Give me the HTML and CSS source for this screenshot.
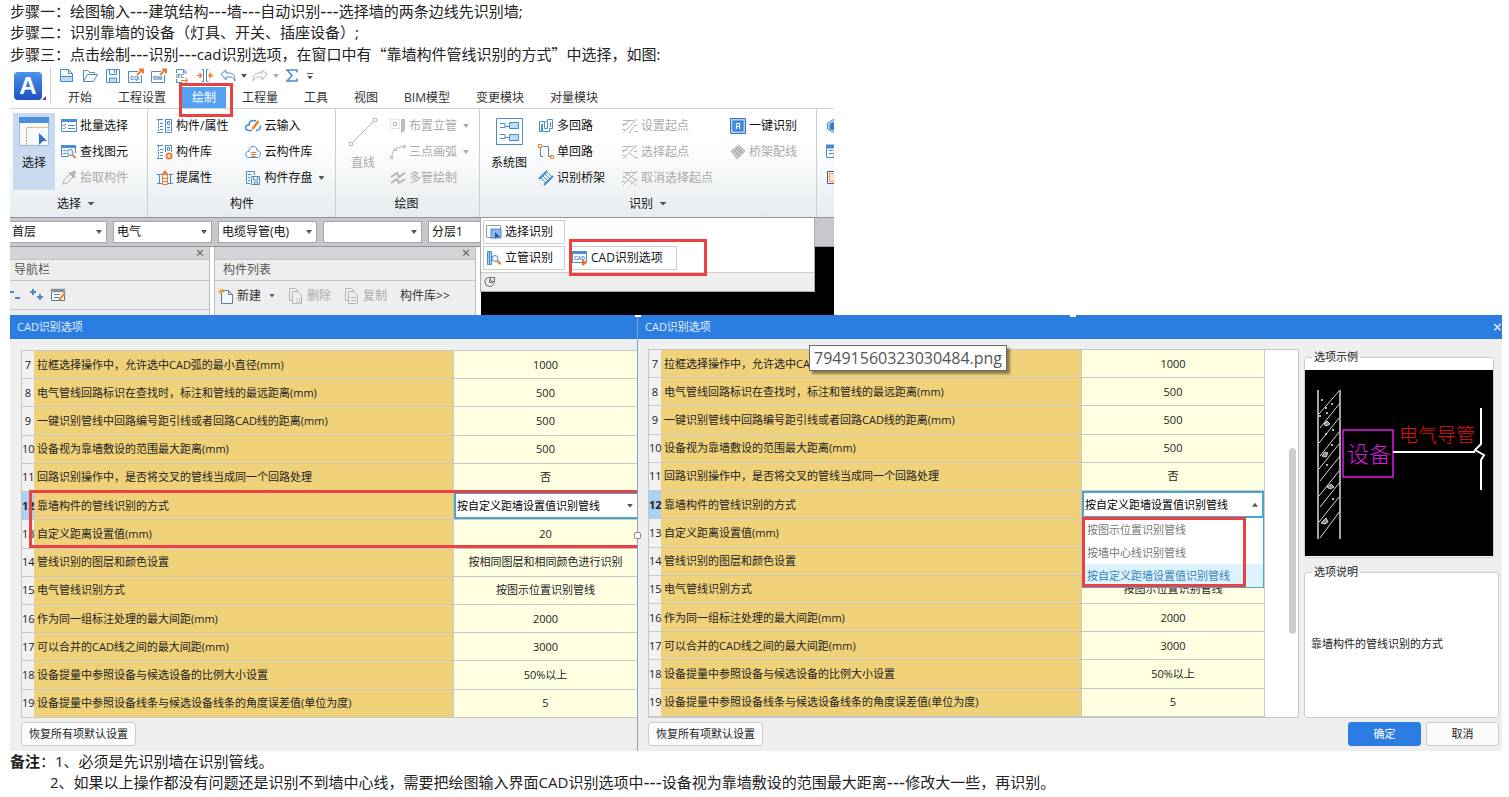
FILE: index.html
```html
<!DOCTYPE html>
<html lang="zh-CN">
<head>
<meta charset="utf-8">
<title>CAD识别选项</title>
<link rel="stylesheet" href="styles.css">
</head>
<body>
<main class="article">
<p>步骤一：绘图输入<span class="dash">---</span>建筑结构<span class="dash">---</span>墙<span class="dash">---</span>自动识别<span class="dash">---</span>选择墙的两条边线先识别墙;</p>
<p>步骤二：识别靠墙的设备（灯具、开关、插座设备）;</p>
<p>步骤三：点击绘制<span class="dash">---</span>识别<span class="dash">---</span>cad识别选项，在窗口中有<span class="cjk">“</span>靠墙构件管线识别的方式<span class="cjk">”</span>中选择，如图:</p>

<section class="app">
  <header class="app-head">
    <div class="logo-cell"><span class="logo">A</span><i class="corner"></i></div>
    <div class="head-rows">
      <div class="quick">
        <svg viewBox="0 0 16 16" class="blue"><path d="M2 9h12v5H2z" fill="#bcdcf5" stroke="none"/><path d="M1.500 1.500h8l4 4v8h-12zM9.500 1.500v4h4M1.500 8.500h12"/></svg>
        <svg viewBox="0 0 16 16" class="blue"><path d="M1.500 13.500v-11h4l2 2h5v2M1.500 13.500l4-7h10l-4 7z"/></svg>
        <svg viewBox="0 0 16 16" class="blue"><path d="M4 10h8v4H4z" fill="#bcdcf5" stroke="none"/><path d="M1.500 1.500h13v13h-13zM4.500 1.500v5h7v-5M4.500 14v-4h7v4M9.500 2v3"/></svg>
        <svg viewBox="0 0 16 16" class="blue"><path d="M10 3.500H.5v11h13V7"/><text x="2" y="12">GQI</text><path class="or" d="M9 7l5-5M11 1.500h4v4" stroke-width="2"/></svg>
        <svg viewBox="0 0 16 16" class="blue"><path d="M10 3.500H.5v11h13V7"/><text x="2" y="12">BIM</text><path class="or" d="M9 7l5-5M11 1.500h4v4" stroke-width="2"/></svg>
        <svg viewBox="0 0 16 16" class="blue"><path d="M2.500 5V1.500h7l3 3V5M9.500 2v3h3M2.500 11v3.500h6"/><text x="2" y="10">IFC</text><path class="or" d="M7 12.500h6M11 10l3 2.500-3 2.500"/></svg>
        <svg viewBox="0 0 16 16" class="blue"><path class="or" stroke-width="1.500" d="M0 7.500h4M2.500 5l2 2.500-2 2.500M16 7.500h-4M14 5l-2 2.500 2 2.500"/><path d="M6.500 1.500v12M9.500 1.500v12M5 1.500h2M5 13.500h2M9.500 1.500h2M9.500 13.500h2"/></svg>
        <svg viewBox="0 0 16 16" class="blue"><path d="M1 6l5-4v3h3c4 0 6 3 6 8-2-4-4-4-6-4H6v3z"/></svg>
        <i class="caret"></i>
        <svg viewBox="0 0 16 16" class="gray"><path d="M15 6l-5-4v3H7c-4 0-6 3-6 8 2-4 4-4 6-4h3v3z"/></svg>
        <i class="caret pale"></i>
        <svg viewBox="0 0 16 16" class="blue"><path d="M13 4.500V2H3l5 5.500L3 13h10v-2.500" stroke-width="1.500"/></svg>
        <i class="more"><i class="caret"></i></i>
      </div>
      <nav class="tabs">
        <button>开始</button><button>工程设置</button><button class="active">绘制</button><button>工程量</button><button>工具</button><button>视图</button><button>BIM模型</button><button>变更模块</button><button>对量模块</button>
        <span class="mark mark-tab"></span>
      </nav>
    </div>
  </header>

  <div class="ribbon">
    <div class="group g-select">
      <div class="tools">
        <button class="big on"><svg viewBox="0 0 30 30"><path d="M.5.5h29v28H.5z" fill="#f6f9fd" stroke="#9dbbe0"/><path d="M0 0h30v6H0z" fill="#4a90dc"/><path d="M7.500 28V10.500H29" fill="none" stroke="#e8a33a" stroke-dasharray="2 1"/><path d="M20 16l8 8h-4l-4 4z" fill="#2f74c0"/></svg>选择</button>
        <div class="stack">
          <button><svg viewBox="0 0 16 16" class="blue"><path d="M.5 1.500h15v12H.5zM7 7.500h7M7 10.500h7M2 7l1 1 2-2M2 10l1 1 2-2"/><path d="M0 1h16v3H0z" fill="#4a8fd6" stroke="none"/></svg>批量选择</button>
          <button><svg viewBox="0 0 16 16" class="blue"><path d="M14.500 9V2.500H.5v10h7M2 6.500h3M2 9.500h3"/><path d="M0 1h15v3H0z" fill="#4a8fd6" stroke="none"/><circle cx="9" cy="8.500" r="3" fill="#e6f3fd"/><path class="or" d="M11.500 11l3 3" stroke-width="2"/></svg>查找图元</button>
          <button class="off"><svg viewBox="0 0 16 16" class="gray"><path d="M2 14l1-4 6-6 3 3-6 6z"/><path d="M8 3l5 5 1-2-1-1 2-3-2-1-3 2-1-1z" fill="#b5b5b5"/></svg>拾取构件</button>
        </div>
      </div>
      <div class="caption">选择<i class="caret"></i></div>
    </div>
    <div class="group g-comp">
      <div class="tools">
        <div class="stack">
          <button><svg viewBox="0 0 16 16" class="blue"><path d="M0 1.500h6M0 14.500h6M3 5.500h3M3 8.500h3M3 11.500h3"/><path d="M1.500 2v12" stroke-dasharray="2 1"/><path d="M8.500 1.500h6v13h-6zM10.500 3.500h2v3h-2zM10 9.500h3M10 12h3"/></svg>构件/属性</button>
          <button><svg viewBox="0 0 16 16" class="blue"><path d="M0 1.500h6M0 14.500h6M3 5.500h3M3 8.500h3M3 11.500h3"/><path d="M1.500 2v12" stroke-dasharray="2 1"/><path d="M8.500 8V1.500h6V8M10.500 3.500h2v3h-2z"/><circle class="or" cx="12" cy="12" r="2.500" stroke-width="2"/></svg>构件库</button>
          <button><svg viewBox="0 0 16 16" class="blue"><path d="M0 4.500h4M2.500 4v10M0 13.500h5M11 13.500h5M12 4.500h4M13.500 4v10"/><path d="M5.500 5v9.500h5V5M6 8.500h5M6 11.500h5" class="or"/><path d="M8 0l4 5H4z" fill="#ed7d31" stroke="none"/></svg>提属性</button>
        </div>
        <div class="stack">
          <button><svg viewBox="0 0 16 16" class="blue"><path d="M7 12.500H4C-1 12.500 0 6 4 7c0-5 5-5 7-4M11 12.500c3 0 5-2 4-5" stroke-width="1.500"/><path class="or" d="M7.500 11l6-8" stroke-width="2.500"/></svg>云输入</button>
          <button><svg viewBox="0 0 16 16" class="blue"><path d="M4 13.500C-1 13 0 7 4 7.500c0-7 9-6 8-1 5 0 4 7 0 7z"/><path class="or" d="M6 8.500h5M5.500 10.500h6M6.500 12.500h4"/></svg>云构件库</button>
          <button><svg viewBox="0 0 16 16" class="blue"><path d="M5 13.500H1.500v-12h8V5M3 4.500h3M3 7.500h2M3 10.500h2M6.500 6.500h8v8h-8zM8.500 7v3h4V7M9.500 14v-2h3v2"/></svg>构件存盘<i class="caret"></i></button>
        </div>
      </div>
      <div class="caption">构件</div>
    </div>
    <div class="group g-draw">
      <div class="tools">
        <button class="big off"><svg viewBox="0 0 30 30" class="gray"><path d="M4 26L26 4"/><path d="M1.500 25.500h3v3h-3zM25.500 1.500h3v3h-3z" fill="#fff"/></svg>直线</button>
        <div class="stack">
          <button class="off"><svg viewBox="0 0 16 16" class="gray"><path d="M.5 1.500h9v9h-9z" stroke-dasharray="1 2"/><path d="M3.500 4.500h3v3h-3z"/><path d="M11.500 1.500h3v11l-3 2zM13 2v11" fill="#d0d0d0"/></svg>布置立管<i class="caret pale"></i></button>
          <button class="off"><svg viewBox="0 0 16 16" class="gray"><path d="M2 13C2 6 6 3 14 2.500"/><path d="M.5 12.500h2v2h-2zM13.500 1.500h2v2h-2zM4.500 4.500h2v2h-2z" fill="#fff"/></svg>三点画弧<i class="caret pale"></i></button>
          <button class="off"><svg viewBox="0 0 16 16" class="gray"><path d="M1 7l6-4 2 4 6-4M1 13l6-4 2 4 6-4" stroke-width="2"/></svg>多管绘制</button>
        </div>
      </div>
      <div class="caption">绘图</div>
    </div>
    <div class="group g-rec">
      <div class="tools">
        <button class="big"><svg viewBox="0 0 30 30" class="blue"><path d="M2.500 1.500h26v26h-26zM6 6.500h5v4H6M11 9.500h4M6 17.500h5v4H6M11 20.500h4"/><path d="M15.500 5.500h9v6h-9zM15.500 17.500h9v6h-9z" fill="#b9dcf8"/></svg>系统图</button>
        <div class="stack">
          <button><svg viewBox="0 0 16 16" class="blue"><path d="M1.500 14V3.500h5v7h3v-9h5v9h-3v3h-7v-8M9.500 3.500h-2M12.500 4v5M1.500 13.500h2v-7"/></svg>多回路</button>
          <button><svg viewBox="0 0 16 16" class="gray"><path d="M2.500 4v8.500H5M4.500 2.500h6v10h3" stroke="#648098"/><path class="or" d="M.5.5h3v3h-3zM12.500 11.500h3v3h-3z"/></svg>单回路</button>
          <button><svg viewBox="0 0 16 16" class="blue"><path d="M1 9l8-8M6 15l9-9" stroke-width="2"/><path d="M3 8l5 5M5 6l5 5M7 4l5 5M9 2l5 5"/></svg>识别桥架</button>
        </div>
        <div class="stack">
          <button class="off"><svg viewBox="0 0 16 16" class="gray"><path d="M1 2.500h11M1 8l7-6M1 15L15 1M0 6.500h5M7 15l6-8M12 7.500h3M12 13.500h4M0 11.500h3"/></svg>设置起点</button>
          <button class="off"><svg viewBox="0 0 16 16" class="gray"><path d="M1 2.500h11M1 8l7-6M1 15L15 1M0 6.500h5M8 9l5 5M12 7.500h3M12 13.500h4M0 11.500h3"/></svg>选择起点</button>
          <button class="off"><svg viewBox="0 0 16 16" class="gray"><path d="M1 2.500h14M1 8l7-6M1 15L15 1M8 15l7-7M1 6l13 9M4 3l11 8M0 11.500h3"/></svg>取消选择起点</button>
        </div>
        <div class="stack">
          <button><svg viewBox="0 0 16 16" class="blue"><path d="M.5.5h15v15H.5z" fill="#a9d2f6" stroke="#3c75b8"/><path d="M3 3h10v10H3z" fill="#4a90e0" stroke="#3c75b8"/><path d="M6.500 11V5.500h3V11M7 8.500h2" stroke="#fff"/></svg>一键识别</button>
          <button class="off"><svg viewBox="0 0 16 16" class="gray"><path d="M1 7l8-6 6 6-8 8z" fill="#ccc"/><path d="M4 6l5 6M6 4l5 6M8 3l5 6" stroke="#999"/></svg>桥架配线</button>
        </div>
      </div>
      <div class="caption">识别<i class="caret"></i></div>
    </div>
    <div class="group g-more">
      <div class="stack">
        <button aria-label="三维"><svg viewBox="0 0 16 16" class="blue"><path d="M1.500 5l7-4v14l-7-4z" fill="#b9dcf8"/><path d="M4 6l4-2v8l-4-1z" fill="#3475c5"/></svg></button>
        <button aria-label="表格"><svg viewBox="0 0 16 16" class="blue"><path d="M.5 1.500h15v12H.5zM3 6.500h4M3 9.500h4"/><path d="M0 1h16v3H0z" fill="#4a8fd6"/><path class="or" d="M8 8v5"/></svg></button>
        <button aria-label="区域"><svg viewBox="0 0 16 16" class="gray"><path d="M1.500 1.500h13v12h-13z" stroke="#557"/><path class="or" d="M3.500 3.500h9v8h-9z" fill="#fae0c8" stroke-dasharray="2 1"/></svg></button>
      </div>
    </div>
  </div>

  <div class="work">
    <div class="combos">
      <label class="combo"><select aria-label="楼层"><option>首层</option></select></label>
      <label class="combo"><select aria-label="专业"><option>电气</option></select></label>
      <label class="combo"><select aria-label="构件类型"><option>电缆导管(电)</option></select></label>
      <label class="combo"><select aria-label="构件"><option></option></select></label>
      <label class="combo"><select aria-label="分层"><option>分层1</option></select></label>
    </div>
    <div class="panels">
      <section class="panel nav-panel">
        <div class="strip"><button aria-label="关闭">×</button></div>
        <h2>导航栏</h2>
        <div class="bar">
          <svg viewBox="2 0 16 16" class="blue bold"><path d="M2 5h4M7 11h5"/></svg>
          <svg viewBox="0 0 16 16" class="blue bold"><path d="M0 5h6M3 2v6M7 10h6M10 7v6"/></svg>
          <svg viewBox="0 0 16 16" class="gray"><path d="M1.500 2.500h13v11h-13zM4 7.500h6M4 10.500h5" fill="#fff" stroke="#5a7894"/><path d="M1 2h14v3H1z" fill="#6b87a0"/><path class="or" d="M9 13l6-7" stroke-width="2"/></svg>
        </div>
      </section>
      <section class="panel list-panel">
        <div class="strip"><button aria-label="关闭">×</button></div>
        <h2>构件列表</h2>
        <div class="bar">
          <button><svg viewBox="0 0 16 16"><path d="M3.500 2.500h7l4 4v9h-11zM10.500 2.500v4h4" fill="#f0f6fb" stroke="#687c90"/><path d="M0 3.500h6M3 .5v6M1 1.500l4 4M5 1.500l-4 4" stroke="#eda32f"/></svg>新建<i class="caret"></i></button>
          <button class="off"><svg viewBox="0 0 16 16" class="gray"><path d="M4 12.500H1.500V.5h6l3 3M4.500 3.500h5l4 4v8h-9zM8 10l5 5M13 10l-5 5"/></svg>删除</button>
          <button class="off"><svg viewBox="0 0 16 16" class="gray"><path d="M4 12.500H1.500V.5h6l3 3M4.500 3.500h5l4 4v8h-9zM7 9.500h5M7 12.500h5"/></svg>复制</button>
          <button>构件库&gt;&gt;</button>
        </div>
      </section>
      <div class="canvas"></div>
    </div>
    <div class="popover">
      <div class="pop-body">
        <button><svg viewBox="0 0 16 16" class="blue"><path d="M.5 1.500h14v12H.5z" stroke="#8a9db0"/><path d="M5 5h10v9H5z" fill="#8db9ea"/><path d="M9 8l5 5h-3l-2 2z" fill="#235a9c" stroke="none"/></svg>选择识别</button>
        <button><svg viewBox="0 0 16 16" class="blue"><path d="M1.500 1.500h4v13h-4zM3.500 2v12" fill="#a8cdf4"/><circle cx="9" cy="8.500" r="3" fill="#eaf5fe"/><path class="or" d="M11.500 11l3 3" stroke-width="2.500"/></svg>立管识别</button>
        <button class="cad"><svg viewBox="0 0 16 16" class="blue"><path d="M.5 1.500h14v11H.5z"/><path d="M0 1h15v3H0z" fill="#4a8fd6" stroke="none"/><text x="2" y="10">CAD</text><path d="M10 9l5 4-5 3z" fill="#ed6a2d" stroke="none"/></svg>CAD识别选项</button>
      </div>
      <div class="pop-foot"><svg viewBox="0 0 12 12"><path d="M10 6.500A4.500 4.500 0 1 1 5 1.500M8.500 6.500h-3v-3M5.500 1.500h5v4h-3z" fill="none" stroke="#666"/></svg></div>
      <span class="mark mark-cad"></span>
    </div>
  </div>
</section>

<div class="dialogs">
  <section class="dialog first">
    <header class="title">CAD识别选项</header>
    <div class="content">
      <div class="table-box">
        <table>
          <colgroup><col class="c-no"><col><col class="c-val"></colgroup>
          <tbody>
          <tr><th>7</th><td>拉框选择操作中，允许选中CAD弧的最小直径(mm)</td><td>1000</td></tr>
          <tr><th>8</th><td>电气管线回路标识在查找时，标注和管线的最远距离(mm)</td><td>500</td></tr>
          <tr><th>9</th><td>一键识别管线中回路编号距引线或者回路CAD线的距离(mm)</td><td>500</td></tr>
          <tr><th>10</th><td>设备视为靠墙敷设的范围最大距离(mm)</td><td>500</td></tr>
          <tr><th>11</th><td>回路识别操作中，是否将交叉的管线当成同一个回路处理</td><td>否</td></tr>
          <tr class="current"><th>12</th><td>靠墙构件的管线识别的方式</td><td><label class="combo"><select aria-label="靠墙构件的管线识别的方式"><option>按自定义距墙设置值识别管线</option></select></label></td></tr>
          <tr><th>13</th><td>自定义距离设置值(mm)</td><td>20</td></tr>
          <tr><th>14</th><td>管线识别的图层和颜色设置</td><td>按相同图层和相同颜色进行识别</td></tr>
          <tr><th>15</th><td>电气管线识别方式</td><td>按图示位置识别管线</td></tr>
          <tr><th>16</th><td>作为同一组标注处理的最大间距(mm)</td><td>2000</td></tr>
          <tr><th>17</th><td>可以合并的CAD线之间的最大间距(mm)</td><td>3000</td></tr>
          <tr><th>18</th><td>设备提量中参照设备与候选设备的比例大小设置</td><td>50%以上</td></tr>
          <tr><th>19</th><td>设备提量中参照设备线条与候选设备线条的角度误差值(单位为度)</td><td>5</td></tr>
          </tbody>
        </table>
        <span class="mark mark-rows"></span>
      </div>
    </div>
    <footer class="foot"><button class="btn reset">恢复所有项默认设置</button></footer>
    <span class="handle"></span>
  </section>

  <section class="dialog second">
    <header class="title">CAD识别选项<button aria-label="关闭">×</button></header>
    <div class="content">
      <div class="table-box scroll">
        <table>
          <colgroup><col class="c-no"><col><col class="c-val"></colgroup>
          <tbody>
          <tr><th>7</th><td>拉框选择操作中，允许选中CAD弧的最小直径(mm)</td><td>1000</td></tr>
          <tr><th>8</th><td>电气管线回路标识在查找时，标注和管线的最远距离(mm)</td><td>500</td></tr>
          <tr><th>9</th><td>一键识别管线中回路编号距引线或者回路CAD线的距离(mm)</td><td>500</td></tr>
          <tr><th>10</th><td>设备视为靠墙敷设的范围最大距离(mm)</td><td>500</td></tr>
          <tr><th>11</th><td>回路识别操作中，是否将交叉的管线当成同一个回路处理</td><td>否</td></tr>
          <tr class="current"><th>12</th><td>靠墙构件的管线识别的方式</td><td><label class="combo open"><select aria-label="靠墙构件的管线识别的方式"><option>按自定义距墙设置值识别管线</option></select></label>
            <ul class="menu"><li>按图示位置识别管线</li><li>按墙中心线识别管线</li><li class="chosen">按自定义距墙设置值识别管线</li></ul></td></tr>
          <tr><th>13</th><td>自定义距离设置值(mm)</td><td></td></tr>
          <tr><th>14</th><td>管线识别的图层和颜色设置</td><td></td></tr>
          <tr><th>15</th><td>电气管线识别方式</td><td>按图示位置识别管线</td></tr>
          <tr><th>16</th><td>作为同一组标注处理的最大间距(mm)</td><td>2000</td></tr>
          <tr><th>17</th><td>可以合并的CAD线之间的最大间距(mm)</td><td>3000</td></tr>
          <tr><th>18</th><td>设备提量中参照设备与候选设备的比例大小设置</td><td>50%以上</td></tr>
          <tr><th>19</th><td>设备提量中参照设备线条与候选设备线条的角度误差值(单位为度)</td><td>5</td></tr>
          </tbody>
        </table>
        <span class="thumb"></span>
      </div>
      <aside class="side">
        <fieldset class="sample">
          <legend>选项示例</legend>
          <svg viewBox="0 0 188 186">
            <rect width="188" height="186" fill="#000"/>
            <g fill="none" stroke="#d8d8d8">
              <path d="M13 20v149M35 20v149" stroke-width="1.500"/>
              <path d="M14 44l20-23M15 58l20-25M14 73l20-25M15 86l20-25M14 99l20-25M15 111l20-25M14 126l20-25M15 137l20-25M14 152l20-25M15 168l20-27"/>
              <path d="M19 54l3-3 3 3-4 2zM17 86l3-4 3 1-2 4zM22 117l4-3 3 3-4 2zM16 153l5-5 2 4-3 2z" fill="#888"/>
            </g>
            <g fill="#eee"><circle cx="17" cy="30" r="1"/><circle cx="27" cy="34" r="1"/><circle cx="21" cy="38" r="1"/><circle cx="22" cy="43" r="1"/><circle cx="15" cy="46" r="1"/><circle cx="21" cy="64" r="1"/><circle cx="28" cy="60" r="1"/><circle cx="27" cy="75" r="1"/><circle cx="22" cy="95" r="1"/><circle cx="28" cy="129" r="1"/></g>
            <rect x="38" y="60" width="50" height="47" fill="none" stroke="#e815e8" stroke-width="1.500"/>
            <text x="42" y="92" font-size="22" font-weight="300" fill="#d81be0">设备</text>
            <text x="94" y="72" font-size="19" font-weight="300" fill="#e01010">电气导管</text>
            <path d="M88 82h82M176 38v36l-6 6 9 5-3 5v30" fill="none" stroke="#fff" stroke-width="2"/>
          </svg>
        </fieldset>
        <fieldset class="note">
          <legend>选项说明</legend>
          <p>靠墙构件的管线识别的方式</p>
        </fieldset>
      </aside>
    </div>
    <footer class="foot"><button class="btn reset">恢复所有项默认设置</button><span class="spacer"></span><button class="btn ok">确定</button><button class="btn">取消</button></footer>
    <span class="tooltip">79491560323030484.png</span>
    <span class="dot dot-left"></span><span class="dot dot-mid"></span>
  </section>
</div>

<p><b>备注</b>：1、必须是先识别墙在识别管线。</p>
<p class="indent">2、如果以上操作都没有问题还是识别不到墙中心线，需要把绘图输入界面CAD识别选项中<span class="dash">---</span>设备视为靠墙敷设的范围最大距离<span class="dash">---</span>修改大一些，再识别。</p>
</main>
</body>
</html>
```

FILE: styles.css
```css
* { box-sizing: border-box; }
body {
  margin: 0;
  background: #fff;
  color: #222;
  font: 15px/21px "Open Sans", "Noto Sans CJK SC", sans-serif;
}
.article { padding: 1px 7px 0 10px; }
.article p { margin: 0; }
.dash { font-family: "DejaVu Sans", sans-serif; font-size: 17px; line-height: 16px; }
.cjk { font-family: "Noto Sans CJK SC", sans-serif; }
.indent { padding-left: 40px; }

button, select { font: inherit; color: inherit; margin: 0; padding: 0; border: 0; background: none; border-radius: 0; }
svg { display: block; flex: none; width: 16px; height: 16px; }
svg text { font-family: "Noto Sans CJK SC", sans-serif; stroke: none; }
.blue { fill: none; stroke: #4a8bc9; }
.blue text { fill: #3f7fc0; font: bold 5px "Liberation Sans", sans-serif; }
.gray { fill: none; stroke: #b5b5b5; }
.or { stroke: #ed7d31; }
.bold { stroke-width: 2; }
.caret { display: block; flex: none; width: 6px; height: 4px; background: #555; clip-path: polygon(0 0, 100% 0, 50% 100%); }
.caret.pale { background: #aaa; }
.mark { position: absolute; border: 3px solid #ec4043; pointer-events: none; }

/* application window */
.app {
  max-width: 824px;
  overflow: hidden;
  background: #fff;
  color: #111;
  font-size: 12px;
  line-height: 18px;
}
.app-head { display: flex; height: 43px; }
.logo-cell { display: flex; align-items: flex-end; width: 41px; height: 37px; margin-top: 2px; padding: 0 0 4px 4px; border-right: 1px solid #d5d5d5; }
.logo {
  width: 28px; height: 28px; border-radius: 4px;
  background: linear-gradient(#4b95ea, #1f4fc0);
  color: #fff; text-align: center;
  font: bold 24px/28px "Liberation Sans", sans-serif;
}
.corner { width: 4px; height: 4px; background: #555; clip-path: polygon(100% 0, 100% 100%, 0 100%); }
.head-rows { flex: 1; }
.quick { display: flex; align-items: center; gap: 7px; height: 22px; padding-left: 8px; }
.quick > .caret { margin: 0 -2px; }
.more { padding-top: 2px; border-top: 1px solid #555; }
.tabs { position: relative; display: flex; height: 21px; padding-left: 4px; color: #333; }
.tabs button { padding: 0 13px; white-space: nowrap; }
.tabs .active { margin: 0 3px; padding: 0 10px; background: #55a2f3; color: #fff; }
.mark-tab { left: 128px; top: -4px; width: 54px; height: 34px; z-index: 2; }

.ribbon {
  display: flex;
  height: 109px;
  border-top: 1px solid #cfd3d6;
  background: linear-gradient(#fff 30%, #e6ecef);
}
.group { flex: none; display: flex; flex-direction: column; padding-top: 4px; border-right: 1px solid #c9ced2; }
.g-select { width: 138px; padding-left: 3px; }
.g-comp { width: 188px; padding-left: 9px; }
.g-draw { width: 144px; padding-left: 6px; }
.g-rec { width: 337px; padding-left: 8px; }
.g-more { width: 30px; padding-left: 9px; border: 0; }
.tools { display: flex; gap: 17px; }
.g-select .tools, .g-draw .tools { gap: 6px; }
.g-rec .big { margin-right: -9px; }
.big { display: flex; flex-direction: column; align-items: center; gap: 7px; width: 42px; height: 77px; padding-top: 4px; white-space: nowrap; }
.big svg { width: 30px; height: 30px; }
.big.on { background: #c9d9ef; }
.stack { display: flex; flex-direction: column; }
.stack button { display: flex; align-items: center; gap: 3px; height: 26px; white-space: nowrap; }
.stack .caret { margin-left: 3px; }
.off { color: #aaa; }
.caption { display: flex; align-items: center; justify-content: center; gap: 6px; height: 25px; padding-right: 8px; }
.caption .caret { width: 8px; }

.work { position: relative; height: 98px; }
.combos { display: flex; gap: 6px; height: 30px; padding: 3px 0; border-top: 1px solid #92969a; border-bottom: 1px solid #92969a; background: #c6c8cc; }
.combo { position: relative; display: block; }
.combo select { appearance: none; display: block; width: 100%; height: 100%; }
.combo::after {
  content: ""; position: absolute; right: 4px; top: 50%; width: 6px; height: 4px; margin-top: -2px;
  background: #555; clip-path: polygon(0 0, 100% 0, 50% 100%); pointer-events: none;
}
.combo.open::after { clip-path: polygon(50% 0, 100% 100%, 0 100%); }
.combos .combo { flex: none; width: 99px; border: 1px solid #a4a8ac; background: #fff; }
.combos .combo:first-child { width: 97px; border-left: 0; }
.combos select { padding: 0 3px; }
.combos .combo:first-child select { padding-left: 2px; }
.panels { display: flex; height: 68px; }
.panel { flex: none; background: #eee; border-right: 1px solid #b8bbc0; color: #555; }
.nav-panel { width: 200px; margin-right: 4px; }
.list-panel { width: 262px; margin-right: 5px; border-left: 1px solid #b8bbc0; }
.strip { display: flex; justify-content: flex-end; height: 13px; padding-right: 5px; background: #d3d4d8; border-bottom: 1px solid #c2c4c8; }
.strip button { font-size: 14px; line-height: 12px; }
.panel h2 { margin: 0; height: 21px; padding-left: 4px; border-bottom: 1px solid #c2c4c8; font-size: 12px; font-weight: 400; line-height: 20px; }
.list-panel h2 { padding-left: 8px; }
.bar { display: flex; align-items: center; height: 29px; gap: 4px; }
.nav-panel .bar { border-bottom: 1px solid #c2c4c8; }
.bar button { display: flex; align-items: center; gap: 3px; color: #333; white-space: nowrap; }
.bar button.off { color: #aaa; }
.list-panel .bar { gap: 13px; padding-left: 3px; }
.bar .caret { margin-left: 5px; }
.canvas { flex: 1; background: #000; }
.popover { position: absolute; left: 470px; top: 1px; width: 335px; border: 1px solid #aaa; border-top: 0; background: #fff; }
.pop-body { display: grid; grid-template-columns: 82px 106px; gap: 2px 6px; padding: 2px 0 2px 2px; }
.pop-body button { display: flex; align-items: center; gap: 3px; height: 24px; padding-left: 2px; border: 1px solid #ccc; white-space: nowrap; }
.pop-body button:first-child { grid-row: 1; }
.pop-body button:nth-child(2) { grid-row: 2; }
.pop-body .cad { grid-row: 2; grid-column: 2; padding-left: 0; }
.pop-foot { height: 19px; padding: 3px; border-top: 1px solid #ccc; background: #eee; }
.pop-foot svg { width: 12px; height: 12px; }
.mark-cad { left: 88px; top: 21px; width: 138px; height: 37px; }

/* option dialogs */
.dialogs { display: grid; grid-template-columns: 627fr 865fr; color: #222; font-size: 11px; line-height: 16px; }
.dialog { position: relative; display: flex; flex-direction: column; height: 436px; min-width: 0; background: #efefef; }
.title { display: flex; justify-content: space-between; height: 24px; padding-left: 7px; background: #2b7de1; color: #e4f0fd; line-height: 24px; }
.title button { font-size: 16px; color: #fff; }
.content { display: flex; gap: 5px; padding: 11px 0 0 11px; }
.table-box { position: relative; flex: 1; min-width: 0; }
table { width: 100%; height: 368px; table-layout: fixed; border-spacing: 0; border-top: 1px solid #c6c6c6; border-left: 1px solid #c6c6c6; }
.c-no { width: 12px; }
.c-val { width: 183px; }
tr { height: 28px; }
th, td { padding: 0; border-bottom: 1px solid #c8c8c4; border-right: 1px solid #c8c8c4; white-space: nowrap; }
th { font-weight: 400; background: #f1f1f1; border-right: 0; }
td:nth-child(2) { padding-left: 3px; background: #efd179; text-align: left; }
td:nth-child(3) { position: relative; background: #ffffe1; text-align: center; }
.current th { background: #a9d0f5; font-weight: 700; }
td .combo { height: 27px; border: 2px solid #4aa6cc; background: #fff; color: #000; }
td .combo select { padding-left: 1px; }
.first td:last-child, .first .combo { border-right: 0; }
.mark-rows { left: 8px; right: 0; top: 140px; height: 58px; border-right: 0; }
.second { border-left: 1px solid #7fa5cf; }
.second .content { padding: 10px 3px 0 10px; }
.scroll { padding-right: 33px; background: #fff; border-top: 1px solid #c6c6c6; border-bottom: 1px solid #c6c6c6; border-right: 1px solid #c6c6c6; }
.scroll table { height: 367px; border-top: 0; }
.thumb { position: absolute; right: 2px; top: 98px; width: 7px; height: 186px; border-radius: 4px; background: #cdcdcd; }
.menu { position: absolute; z-index: 1; left: 0; right: 0; top: 27px; margin: 0; padding: 0; border: 1px solid #4aa6cc; border-top: 0; background: #fff; color: #777; text-align: left; list-style: none; }
.menu::after { content: ""; position: absolute; left: -1px; top: -1px; right: 17px; bottom: 0; border: 3px solid #ec4043; }
.menu li { height: 23px; padding-left: 4px; line-height: 23px; }
.menu .chosen { background: #dcf2fc; color: #3583bd; }
.side { display: flex; flex-direction: column; flex: none; width: 195px; }
fieldset { min-width: 0; margin: 0; padding: 0; border: 1px solid #ccc; border-radius: 3px; background: #fff; }
legend { margin-left: 7px; padding: 0 2px; line-height: 16px; }
.sample { width: 190px; padding-bottom: 1px; }
.sample svg { width: 188px; height: 186px; margin-top: 5px; }
.note { display: flex; flex: 1; margin-top: 6px; }
.note p { padding: 56px 0 0 6px; }
.foot { display: flex; align-items: center; gap: 5px; margin-top: auto; height: 33px; padding: 0 3px 1px 11px; }
.second .foot { padding-left: 10px; }
.spacer { flex: 1; }
.btn { width: 73px; height: 24px; border: 1px solid #ccc; border-radius: 3px; background: #fbfbfc; white-space: nowrap; }
.btn.reset { width: 115px; }
.btn.ok { background: #2b7de1; border-color: #2b7de1; color: #fff; }
.tooltip { position: absolute; left: 171px; top: 30px; z-index: 2; padding: 0 4px; border: 1px solid #666; background: #fff; box-shadow: 3px 3px 2px rgba(80, 70, 40, .6); color: #555; font-size: 16px; line-height: 24px; }
.handle { position: absolute; right: -4px; top: 217px; z-index: 2; width: 7px; height: 7px; border: 1px solid #888; border-radius: 2px; background: #fff; }
.dot { position: absolute; top: 0; width: 6px; height: 2px; background: #fff; }
.dot-left { left: -3px; }
.dot-mid { left: 50%; }
```
